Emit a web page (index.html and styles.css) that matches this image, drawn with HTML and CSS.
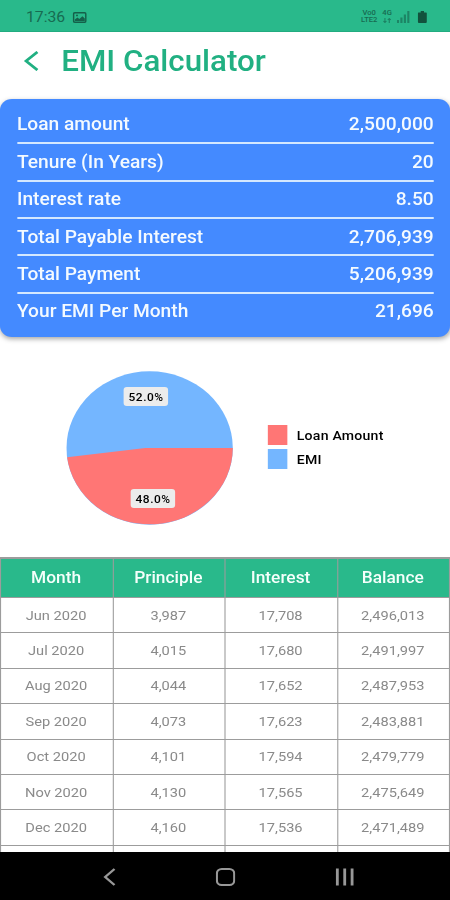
FILE: index.html
```html
<!DOCTYPE html>
<html lang="en">
<head>
  <meta charset="UTF-8">
  <meta name="viewport" content="width=device-width, initial-scale=1.0">
  <title>EMI Calculator</title>
  <link rel="stylesheet" href="styles.css">
</head>

<body>
  <div class="screen">

    <!-- Status bar -->
    <div class="status-bar">
      <span class="time">17:36</span>
      <svg class="picture-icon" width="13" height="11" viewBox="0 0 13 11">
        <rect x="0.8" y="0.8" width="11.4" height="9.4" rx="1.2" fill="none" stroke="#15604a" stroke-width="1.5"/>
        <path d="M2 9 L2 7.6 L4.4 5.4 L6.2 7 L9 4.2 L11.2 6.6 L11.2 9 Z" fill="#15604a"/>
        <circle cx="4" cy="3.4" r="0.9" fill="#15604a"/>
      </svg>
      <div class="status-right">
        <div class="network volte"><span>Vo0</span><span>LTE2</span></div>
        <div class="network data">
          <span>4G</span>
          <svg width="8" height="5" viewBox="0 0 8 5" fill="none" stroke="#1d8062" stroke-width="1">
            <path d="M2 0 V4.5 M0.6 3 L2 4.5 L3.4 3 M6 5 V0.5 M4.6 2 L6 0.5 L7.4 2"/>
          </svg>
        </div>
        <svg class="signal-icon" width="12" height="12" viewBox="0 0 12 12" fill="#1d8565">
          <rect x="0" y="9" width="2" height="3"/>
          <rect x="3.2" y="6.5" width="2" height="5.5"/>
          <rect x="6.4" y="3.5" width="2" height="8.5"/>
          <rect x="9.6" y="0" width="2" height="12"/>
        </svg>
        <svg class="battery-icon" width="9" height="12" viewBox="0 0 9 12">
          <path d="M3 0 H6 V1.5 H8 Q8.6 1.5 8.6 2.2 V11 Q8.6 12 7.6 12 H1.4 Q0.4 12 0.4 11 V2.2 Q0.4 1.5 1 1.5 H3 Z" fill="#12523d"/>
        </svg>
      </div>
    </div>

    <!-- Title -->
    <header>
      <svg class="back-icon" width="14" height="20" viewBox="0 0 14 20" fill="none" stroke="#21b082" stroke-width="2.6">
        <path d="M12.5 0.9 L2 10 L12.5 19.1"/>
      </svg>
      <h1>EMI Calculator</h1>
    </header>

    <!-- Loan summary -->
    <div class="summary">
      <div class="summary-row"><span>Loan amount</span><b>2,500,000</b></div>
      <div class="summary-row"><span>Tenure (In Years)</span><b>20</b></div>
      <div class="summary-row"><span>Interest rate</span><b>8.50</b></div>
      <div class="summary-row"><span>Total Payable Interest</span><b>2,706,939</b></div>
      <div class="summary-row"><span>Total Payment</span><b>5,206,939</b></div>
      <div class="summary-row"><span>Your EMI Per Month</span><b>21,696</b></div>
    </div>

    <!-- Pie chart -->
    <div class="chart">
      <svg class="pie" width="154" height="154" viewBox="0 0 154 154">
        <circle cx="77" cy="77" r="76.7" fill="#74b6ff"/>
        <path d="M73 77 H153.7 A76.7 76.7 0 0 1 0.9 86.2 Z" fill="#ff7675"/>
        <rect x="53" y="16" width="41" height="19" rx="3" fill="#ececec"/>
        <text x="73.7" y="29.6">52.0%</text>
        <rect x="59.5" y="118" width="41" height="19" rx="3" fill="#ececec"/>
        <text x="80.2" y="131.6">48.0%</text>
      </svg>
      <div class="legend">
        <div class="legend-item"><i class="loan"></i>Loan Amount</div>
        <div class="legend-item"><i class="emi"></i>EMI</div>
      </div>
    </div>

    <!-- Payment schedule -->
    <div class="schedule">
      <div class="schedule-row head"><span>Month</span><span>Principle</span><span>Interest</span><span>Balance</span></div>
      <div class="schedule-row"><span>Jun 2020</span><span>3,987</span><span>17,708</span><span>2,496,013</span></div>
      <div class="schedule-row"><span>Jul 2020</span><span>4,015</span><span>17,680</span><span>2,491,997</span></div>
      <div class="schedule-row"><span>Aug 2020</span><span>4,044</span><span>17,652</span><span>2,487,953</span></div>
      <div class="schedule-row"><span>Sep 2020</span><span>4,073</span><span>17,623</span><span>2,483,881</span></div>
      <div class="schedule-row"><span>Oct 2020</span><span>4,101</span><span>17,594</span><span>2,479,779</span></div>
      <div class="schedule-row"><span>Nov 2020</span><span>4,130</span><span>17,565</span><span>2,475,649</span></div>
      <div class="schedule-row"><span>Dec 2020</span><span>4,160</span><span>17,536</span><span>2,471,489</span></div>
      <div class="schedule-row"><span></span><span></span><span></span><span></span></div>
    </div>

    <!-- Navigation bar -->
    <nav>
      <svg width="12" height="18" viewBox="0 0 12 18" fill="none" stroke="#989898" stroke-width="2.2">
        <path d="M10.6 1 L2 9 L10.6 17"/>
      </svg>
      <svg width="18" height="18" viewBox="0 0 18 18" fill="none" stroke="#989898" stroke-width="2">
        <rect x="1" y="1" width="16" height="16" rx="4.5"/>
      </svg>
      <svg width="18" height="18" viewBox="0 0 18 18" fill="#989898">
        <rect x="0.8" y="0.5" width="2.6" height="17"/>
        <rect x="7.6" y="0.5" width="2.6" height="17"/>
        <rect x="14.4" y="0.5" width="2.6" height="17"/>
      </svg>
    </nav>

  </div>
</body>
</html>
```
FILE: styles.css
```css
/* General styles */
* {
  box-sizing: border-box;
}

body {
  margin: 0;
  font-family: Roboto, sans-serif;
  background-color: #fff;
  overflow: hidden;
}

/* 415px layout stretched to the 450px window */
.screen {
  display: flex;
  flex-direction: column;
  width: 415px;
  height: 900px;
  transform: scaleX(1.08434);
  transform-origin: 0 0;
  overflow: hidden;
}

/* Status bar */
.status-bar {
  display: flex;
  align-items: center;
  height: 32px;
  flex: none;
  padding: 3px 21px 0 24px;
  background-color: #29b98b;
  border-bottom: 1px solid #22ac80;
  color: #176b51;
}

.time {
  width: 43px;
  font-size: 14.5px;
}

.status-right {
  display: flex;
  align-items: center;
  margin-left: auto;
}

.network {
  display: flex;
  flex-direction: column;
  align-items: center;
  font-size: 7px;
  line-height: 7px;
  font-weight: 500;
}

.volte {
  width: 17px;
}

.data {
  width: 10px;
  height: 14px;
  margin-left: 3px;
}

.data svg {
  margin-top: 1px;
}

.signal-icon {
  margin-left: 4px;
}

.battery-icon {
  margin-left: 7px;
}

/* Title */
header {
  display: flex;
  align-items: center;
  height: 66px;
  flex: none;
  padding: 0 0 9px 22px;
}

h1 {
  margin: 1px 0 0 20.5px;
  font-size: 28.9px;
  font-weight: 500;
  line-height: 32px;
  color: #21b082;
}

/* Loan summary */
.summary {
  flex: none;
  height: 238px;
  margin-top: 1px;
  padding: 7.8px 15px 0 15.7px;
  background-color: #448aff;
  border-radius: 11px;
  box-shadow: 0 2px 5px rgba(0, 0, 0, 0.35);
  color: #f4faff;
  font-size: 17.7px;
}

.summary-row {
  display: flex;
  justify-content: space-between;
  align-items: center;
  height: 37.4px;
  border-bottom: 2px solid #d4e8ff;
  font-weight: 500;
}

.summary-row b {
  font-weight: 500;
}

.summary-row:last-child {
  border-bottom-color: transparent;
}

/* Pie chart */
.chart {
  display: flex;
  flex: none;
  height: 220px;
  padding: 34px 0 0 61.2px;
}

.pie text {
  font-size: 11px;
  font-weight: 500;
  text-anchor: middle;
  letter-spacing: 0.5px;
}

.legend {
  margin: 54px 0 0 32px;
}

.legend-item {
  display: flex;
  align-items: center;
  height: 20px;
  margin-bottom: 4px;
  font-size: 13px;
  font-weight: 500;
  letter-spacing: 0.2px;
}

.legend-item i {
  width: 18px;
  height: 20px;
  margin-right: 8.5px;
}

.loan {
  background-color: #ff7675;
}

.emi {
  background-color: #74b6ff;
}

/* Payment schedule */
.schedule {
  flex: none;
  height: 295px;
  padding: 2px 1px 0 1px;
  background-color: #9c9c9c;
  overflow: hidden;
}

.schedule-row {
  display: grid;
  grid-template-columns: repeat(4, 1fr);
  gap: 1px;
  height: 34.4px;
  margin-bottom: 1px;
  color: #8a8a8a;
  font-size: 13.5px;
}

.schedule-row span {
  display: flex;
  align-items: center;
  justify-content: center;
  padding: 0 1px 1px 0;
  background-color: #fff;
}

.schedule-row.head {
  height: 38px;
  color: #f4fffb;
  font-size: 16px;
  font-weight: 500;
}

.schedule-row.head span {
  background-color: #29b98b;
}

/* Navigation bar */
nav {
  display: flex;
  flex: 1;
  align-items: center;
  gap: 92px;
  padding: 2px 0 0 95px;
  background-color: #000;
}
```
